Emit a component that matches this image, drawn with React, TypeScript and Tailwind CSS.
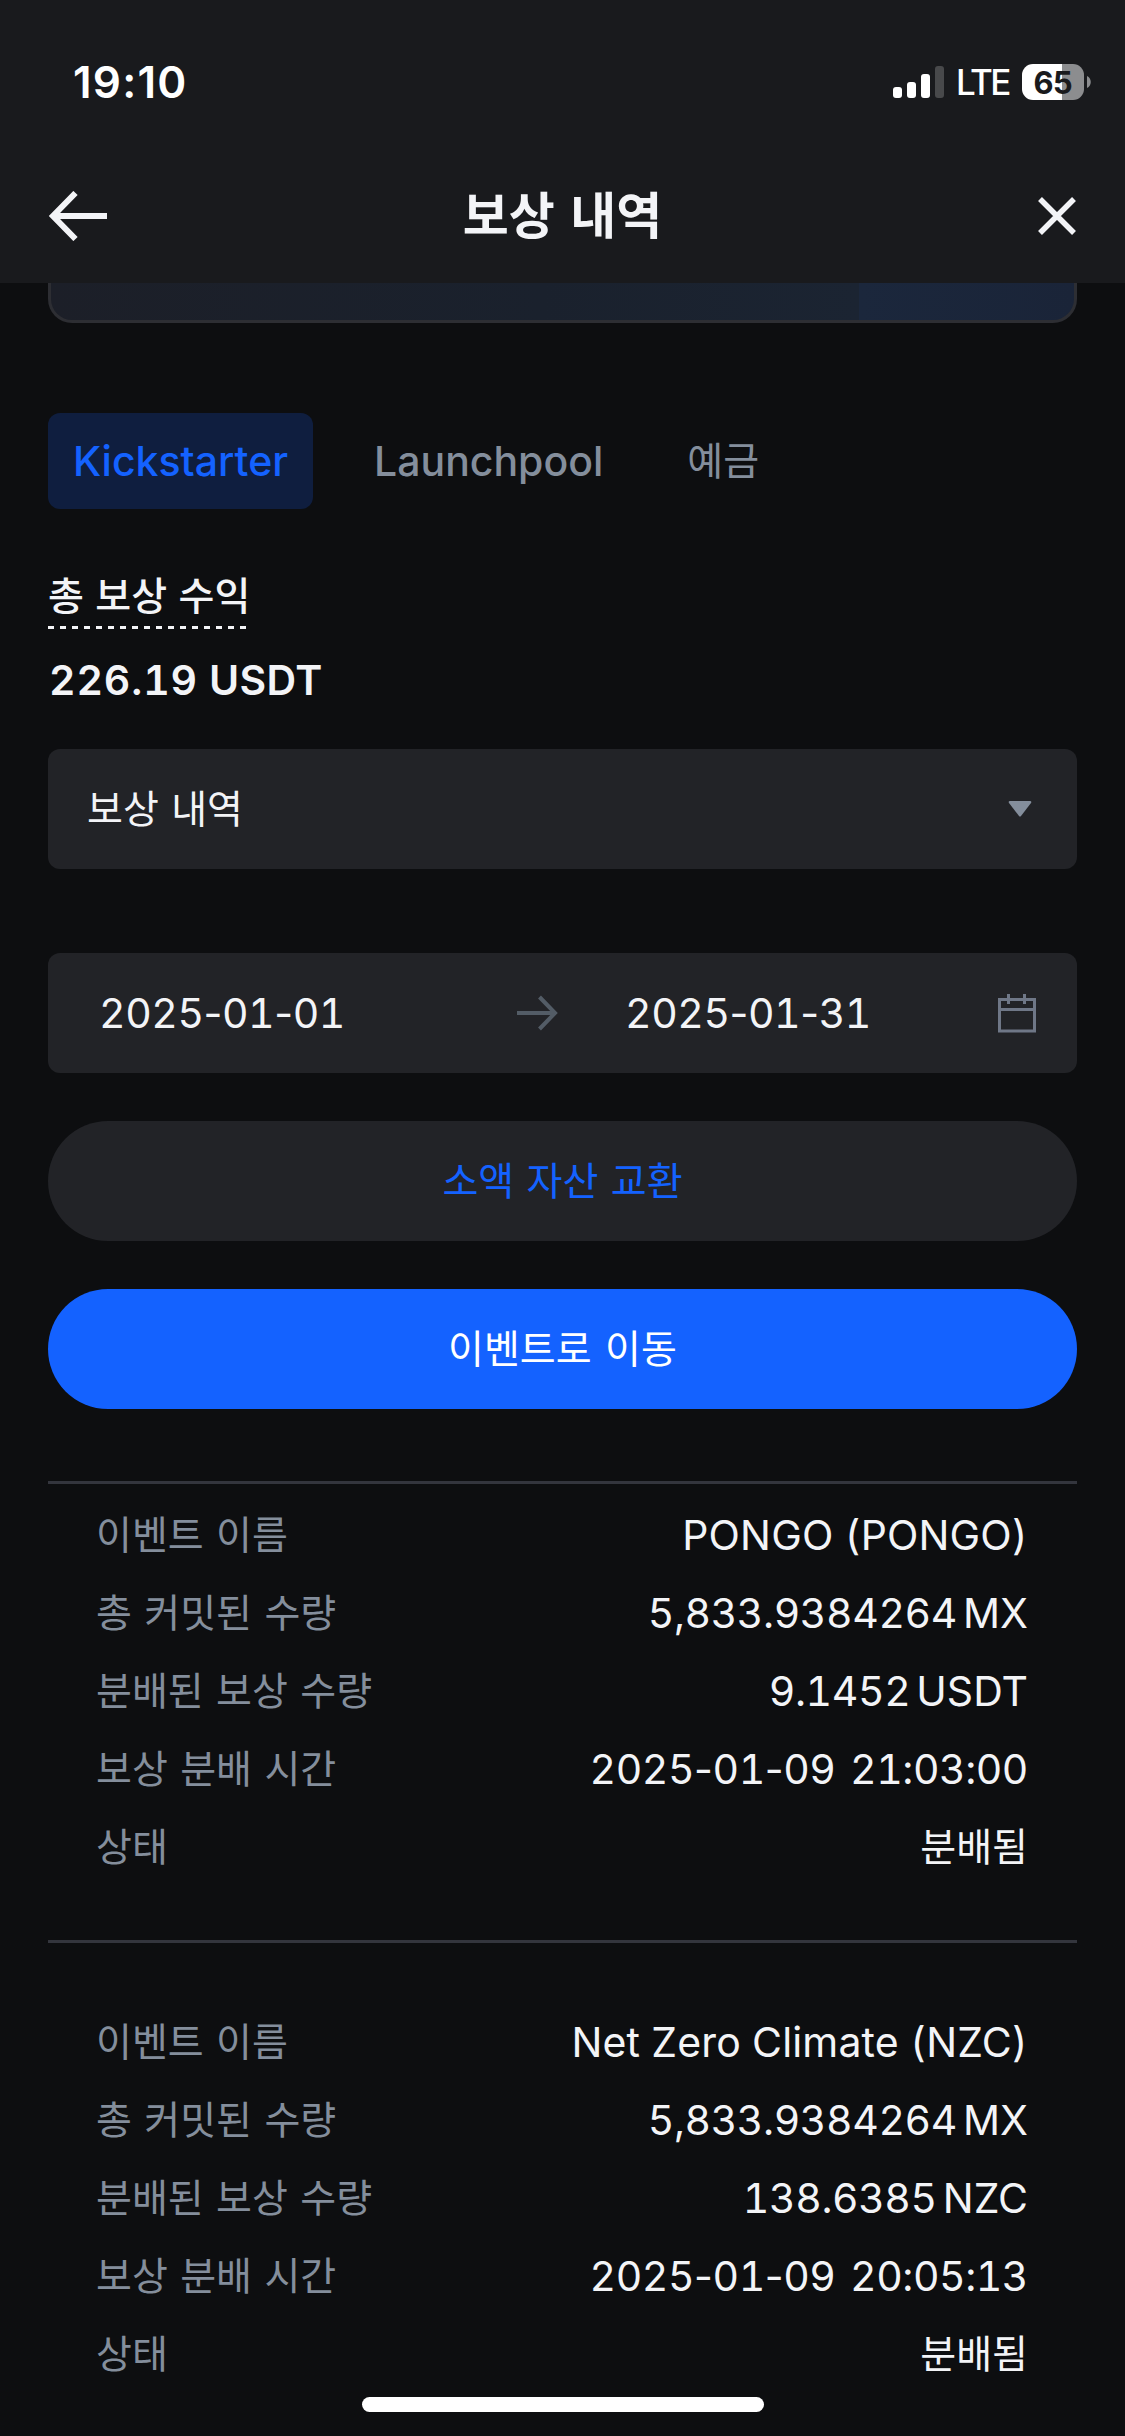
import { Fragment } from "react";

interface Reward {
  name: string;
  committed: [string, string];
  distributed: [string, string];
  time: string;
  status: string;
}

const rewards: Reward[] = [
  {
    name: "PONGO (PONGO)",
    committed: ["5,833.9384264", "MX"],
    distributed: ["9.1452", "USDT"],
    time: "2025-01-09 21:03:00",
    status: "분배됨",
  },
  {
    name: "Net Zero Climate (NZC)",
    committed: ["5,833.9384264", "MX"],
    distributed: ["138.6385", "NZC"],
    time: "2025-01-09 20:05:13",
    status: "분배됨",
  },
];

function StatusBar() {
  return (
    <div className="flex h-[164px] items-center justify-between pr-[34px] pl-[73px] text-white">
      <span className="text-[44px] leading-none font-semibold tracking-[1.2px] proportional-nums">
        19:10
      </span>
      <div className="flex items-center">
        <svg width="51" height="32" viewBox="0 0 51 32" fill="currentColor">
          <rect x="0" y="21" width="9" height="11" rx="3" />
          <rect x="14" y="16" width="9" height="16" rx="3" />
          <rect x="28" y="8" width="9" height="24" rx="3" />
          <rect x="42" y="0" width="9" height="32" rx="3" fill="#48494b" />
        </svg>
        <span className="ml-[12px] w-[53px] text-[35px] leading-none font-medium tracking-[-2.6px]">
          LTE
        </span>
        <div className="ml-[13px] flex h-9 w-[62px] items-center justify-center rounded-[11px] bg-[linear-gradient(to_right,#fff_40px,#8c8d8f_40px)] text-[31px] leading-none font-bold tracking-[-0.6px] text-[#191a1d]">
          65
        </div>
        <svg className="ml-[3px]" width="4" height="12" viewBox="0 0 4 12">
          <path d="M0 0C5 2 5 10 0 12Z" fill="#8c8d8f" />
        </svg>
      </div>
    </div>
  );
}

function Header() {
  return (
    <header className="h-[283px] bg-[#191a1d]">
      <StatusBar />
      <div className="grid h-[104px] grid-cols-[60px_1fr_60px] items-center px-[48px] text-[#f3f4f7]">
        <svg width="60" height="50" viewBox="0 0 60 50" fill="none" stroke="currentColor" strokeWidth="6">
          <path d="M59 25H5M27.5 2L5 25L27.5 48" />
        </svg>
        <h1 className="text-center text-[50px] leading-none font-bold [word-spacing:2px]">보상 내역</h1>
        <svg
          className="ml-auto"
          width="39"
          height="38"
          viewBox="0 0 39 38"
          fill="none"
          stroke="currentColor"
          strokeWidth="5.5"
        >
          <path d="M2 2L36 36M36 2L2 36" />
        </svg>
      </div>
    </header>
  );
}

function Tabs() {
  return (
    <div className="mt-[90px] flex h-24 items-center text-[41px] font-medium text-[#848e9c]">
      <span className="flex h-24 w-[265px] items-center justify-center rounded-xl bg-[#0f1e3f] text-[#1462ff]">
        Kickstarter
      </span>
      <span className="ml-[61px]">Launchpool</span>
      <span className="ml-[84px] pb-[2px] text-[39px] font-normal">예금</span>
    </div>
  );
}

// Digits share one width, hyphens keep their own narrower one.
function DateText({ value }: { value: string }) {
  return (
    <span className="tracking-[-0.45px] [word-spacing:4px]">
      {value.split("-").map((part, i) => (
        <Fragment key={i}>
          {i > 0 && <span className="proportional-nums">-</span>}
          {part}
        </Fragment>
      ))}
    </span>
  );
}

function DateRange() {
  return (
    <div className="mt-[84px] flex h-[120px] items-center rounded-xl bg-[#222327] pr-10 pl-[51px] text-[41px] text-[#f3f4f7]">
      <div className="w-[418px]">
        <DateText value="2025-01-01" />
      </div>
      <svg width="42" height="36" viewBox="0 0 42 36" fill="none" stroke="#535c66" strokeWidth="4">
        <path d="M0 18H37M22.5 2L38 18L22.5 34" />
      </svg>
      <div className="ml-[66px]">
        <DateText value="2025-01-31" />
      </div>
      <svg className="ml-auto" width="40" height="40" viewBox="0 0 40 40" fill="none" stroke="#6f7787" strokeWidth="3">
        <path d="M2.5 6.5H37.5V38H2.5ZM2.5 16.5H37.5M11.5 1V11M27.5 1V11" />
      </svg>
    </div>
  );
}

function Amount({ value }: { value: [string, string] }) {
  return (
    <>
      <span className="tracking-[-0.4px]">{value[0]}</span>
      <span className="ml-[6px]">{value[1]}</span>
    </>
  );
}

function RewardRows({ reward }: { reward: Reward }) {
  const rows = [
    { label: "이벤트 이름", value: <span className="tracking-[0.15px]">{reward.name}</span> },
    { label: "총 커밋된 수량", value: <Amount value={reward.committed} /> },
    { label: "분배된 보상 수량", value: <Amount value={reward.distributed} /> },
    { label: "보상 분배 시간", value: <DateText value={reward.time} /> },
  ];

  return (
    <dl className="grid auto-rows-[78px] grid-cols-[auto_1fr] items-center px-12">
      {rows.map(({ label, value }) => (
        <Fragment key={label}>
          <dt className="pb-[2px] text-[39px] text-[#848e9c] [word-spacing:2px]">{label}</dt>
          <dd className="pr-px text-right text-[41px] text-[#f3f4f7]">{value}</dd>
        </Fragment>
      ))}
      <dt className="pb-[2px] text-[39px] text-[#848e9c]">상태</dt>
      <dd className="pr-px pb-[2px] text-right text-[39px] text-[#f3f4f7]">{reward.status}</dd>
    </dl>
  );
}

export default function App() {
  return (
    <div className="h-[2436px] w-[1125px] overflow-hidden bg-[#0d0e10] font-[Inter,'Noto_Sans_CJK_KR',sans-serif] leading-none whitespace-nowrap tabular-nums">
      <Header />
      <main className="px-12">
        <div className="h-10 rounded-b-[24px] border-[3px] border-t-0 border-[#2d2e33] bg-[linear-gradient(to_right,#1c1f28,#1a212d_48%,#1b2432_79%,#1b273c_79%,#1a2438)]" />
        <Tabs />

        <section className="mt-[64px] text-[#f3f4f7]">
          <h2 className="h-[53px] w-[199px] text-[39px] leading-[46px] font-medium [word-spacing:1px]">
            총 보상 수익
          </h2>
          <div className="h-[3px] w-[199px] bg-[repeating-linear-gradient(to_right,#f3f4f7_0_6px,transparent_6px_12px)]" />
          <p className="mt-[30px] pl-px text-[41px] leading-[42px] font-semibold">
            <span className="tracking-[0.9px]">226.19</span> <span className="tracking-[0.3px]">USDT</span>
          </p>
        </section>

        <div className="mt-[48px] flex h-[120px] items-center justify-between rounded-xl bg-[#222327] pr-[45px] pl-[39px] text-[39px] text-[#f3f4f7]">
          <span className="pb-[2px] [word-spacing:2px]">보상 내역</span>
          <svg width="24" height="16" viewBox="0 0 24 16">
            <path d="M2 0H22Q24 0 23 2L13 15Q12 16 11 15L1 2Q0 0 2 0Z" fill="#848e9c" />
          </svg>
        </div>

        <DateRange />

        <button className="mt-12 block h-[120px] w-full rounded-full bg-[#222327] pb-[2px] text-[39px] text-[#1462ff] [word-spacing:2px]">
          소액 자산 교환
        </button>
        <button className="mt-12 block h-[120px] w-full rounded-full bg-[#1462ff] pb-[2px] text-[39px] text-white [word-spacing:3px]">
          이벤트로 이동
        </button>

        <div className="mt-[72px] border-t-[3px] border-[#33353d] pt-3 pb-[54px]">
          <RewardRows reward={rewards[0]} />
        </div>
        <div className="border-t-[3px] border-[#33353d] pt-[60px]">
          <RewardRows reward={rewards[1]} />
        </div>
      </main>
      <div className="mx-auto mt-1 h-[15px] w-[402px] rounded-full bg-white" />
    </div>
  );
}
